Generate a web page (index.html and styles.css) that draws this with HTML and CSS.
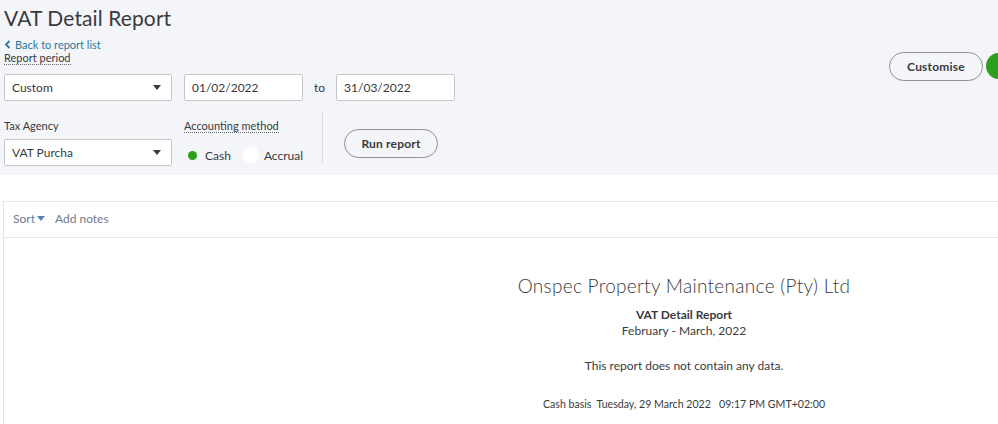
FILE: index.html
```html
<!DOCTYPE html>
<html>
<head>
<meta charset="utf-8">
<link rel="stylesheet" href="styles.css">
</head>
<body>
<div class="top">
  <h1 class="title">VAT Detail Report</h1>
  <div class="header-row">
    <div class="header-left">
      <a class="back"><svg width="7" height="9" viewBox="0 0 7 9"><path d="M5.5 1 L2 4.5 L5.5 8" fill="none" stroke="#2a7aa0" stroke-width="1.8"/></svg>Back to report list</a>
      <div class="label dotted">Report period</div>
      <div class="row1">
        <div class="select w168"><span>Custom</span><span class="caret"></span></div>
        <div class="input w119">01/02/2022</div>
        <span class="to">to</span>
        <div class="input w119">31/03/2022</div>
      </div>
      <div class="row2">
        <div class="field">
          <div class="label">Tax Agency</div>
          <div class="select w168"><span>VAT Purcha</span><span class="caret"></span></div>
        </div>
        <div class="field method">
          <div class="label dotted">Accounting method</div>
          <div class="radios">
            <span class="radio on"></span><span class="rlabel">Cash</span>
            <span class="radio"></span><span class="rlabel">Accrual</span>
          </div>
        </div>
        <div class="divider"></div>
        <button class="pill run">Run report</button>
      </div>
    </div>
    <div class="header-right">
      <button class="pill customise">Customise</button>
      <span class="green"></span>
    </div>
  </div>
</div>
<div class="panel">
  <div class="toolbar">
    <span class="sort">Sort<span class="scaret"></span></span>
    <span class="notes">Add notes</span>
  </div>
  <div class="report">
    <div class="company">Onspec Property Maintenance (Pty) Ltd</div>
    <div class="rname">VAT Detail Report</div>
    <div class="rdate">February - March, 2022</div>
    <div class="nodata">This report does not contain any data.</div>
    <div class="foot">Cash basis&nbsp; Tuesday, 29 March 2022&nbsp;&nbsp; 09:17 PM GMT+02:00</div>
  </div>
</div>
</body>
</html>
```
FILE: styles.css
```css
html, body {
  margin: 0;
  padding: 0;
  background: #ffffff;
  overflow: hidden;
  width: 998px;
  height: 424px;
}
body {
  font-family: Lato, "Open Sans", sans-serif;
  color: #393a3d;
}
.top {
  background: #f4f5f8;
  height: 175px;
  padding: 0 0 0 4px;
  box-sizing: border-box;
  overflow: hidden;
}
.title {
  margin: 0;
  padding-top: 4px;
  font-size: 21px;
  font-weight: 400;
  line-height: 27px;
  color: #393a3d;
  letter-spacing: 0.1px;
}
.header-row {
  display: flex;
  justify-content: space-between;
}
.header-left {
  display: flex;
  flex-direction: column;
}
.back {
  display: flex;
  align-items: center;
  gap: 4px;
  font-size: 11px;
  line-height: 13px;
  color: #2a7aa0;
  margin-top: 7px;
}
.label {
  font-size: 11px;
  line-height: 13px;
  color: #393a3d;
  align-self: flex-start;
}
.dotted {
  border-bottom: 1px dotted #6b6c72;
}
.row1 {
  display: flex;
  align-items: center;
  margin-top: 9px;
}
.select, .input {
  height: 27px;
  box-sizing: border-box;
  background: #fff;
  border: 1px solid #c4c7cc;
  border-radius: 2px;
  font-size: 12px;
  display: flex;
  align-items: center;
  padding: 0 7px;
  color: #393a3d;
}
.select {
  justify-content: space-between;
  padding-right: 10px;
}
.w168 { width: 168px; }
.w119 { width: 119px; margin-left: 12px; }
.caret {
  width: 0; height: 0;
  border-left: 4px solid transparent;
  border-right: 4px solid transparent;
  border-top: 5px solid #393a3d;
}
.to {
  font-size: 12px;
  margin-left: 11px;
  margin-right: -1px;
}
.row2 {
  display: flex;
  margin-top: 17px;
}
.field {
  display: flex;
  flex-direction: column;
}
.field .label { margin-bottom: 7px; margin-top: 1px; }
.method { margin-left: 12px; }
.radios {
  display: flex;
  align-items: center;
  height: 27px;
  font-size: 12px;
}
.radio {
  width: 16px; height: 16px;
  border-radius: 50%;
  background: #fff;
  box-sizing: border-box;
  margin-top: 3px;
}
.radio.on {
  position: relative;
  width: 14px;
  height: 14px;
  background: transparent;
  margin-left: 1px;
}
.radio.on::after {
  content: "";
  position: absolute;
  left: 3px; top: 3px;
  width: 9px; height: 9px;
  border-radius: 50%;
  background: #2ca01c;
}
.rlabel { margin-left: 6px; margin-right: 12px; margin-top: 3px; }
.rlabel:last-child { margin-left: 5px; }
.divider {
  width: 1px;
  background: #dcdde0;
  margin-left: 7px;
  height: 52px;
  margin-top: -7px;
}
.pill {
  font-family: Lato, "Open Sans", sans-serif;
  font-weight: 700;
  font-size: 12px;
  color: #393a3d;
  background: #f4f5f8;
  border: 1px solid #8d9096;
  border-radius: 15px;
  height: 29px;
  box-sizing: border-box;
  padding: 0;
  letter-spacing: 0.2px;
}
.run {
  width: 94px;
  margin-left: 21px;
  margin-top: 11px;
}
.header-right {
  display: flex;
  align-items: flex-start;
  margin-top: 21px;
  margin-right: -14px;
}
.customise {
  width: 94px;
  height: 29px;
}
.green {
  width: 26px; height: 26px;
  border-radius: 50%;
  background: #2ca01c;
  margin-left: 3px;
  margin-top: 1px;
  flex-shrink: 0;
}
.panel {
  margin-top: 26px;
  margin-left: 3px;
  width: 1360px;
  height: 222px;
  border: 1px solid #e4e5e8;
  border-right: none;
  border-bottom: none;
}
.toolbar {
  height: 36px;
  box-sizing: border-box;
  padding-bottom: 3px;
  border-bottom: 1px solid #e4e5e8;
  display: flex;
  align-items: center;
  padding-left: 9px;
  font-size: 12px;
  color: #6b7a8f;
}
.sort { display: flex; align-items: center; }
.scaret {
  width: 0; height: 0;
  border-left: 4px solid transparent;
  border-right: 4px solid transparent;
  border-top: 5px solid #5b7fae;
  margin-left: 2px;
  margin-top: 1px;
}
.notes { margin-left: 10px; }
.report {
  display: flex;
  flex-direction: column;
  align-items: center;
  padding-top: 36px;
  color: #393a3d;
}
.company {
  font-size: 19px;
  font-weight: 300;
  line-height: 24px;
  letter-spacing: 0.3px;
}
.rname {
  font-size: 12px;
  font-weight: 700;
  margin-top: 9px;
  line-height: 16px;
}
.rdate {
  font-size: 12px;
  line-height: 16px;
}
.nodata {
  font-size: 12px;
  margin-top: 19px;
  line-height: 16px;
}
.foot {
  font-size: 10.6px;
  margin-top: 23px;
  line-height: 14px;
}
```
